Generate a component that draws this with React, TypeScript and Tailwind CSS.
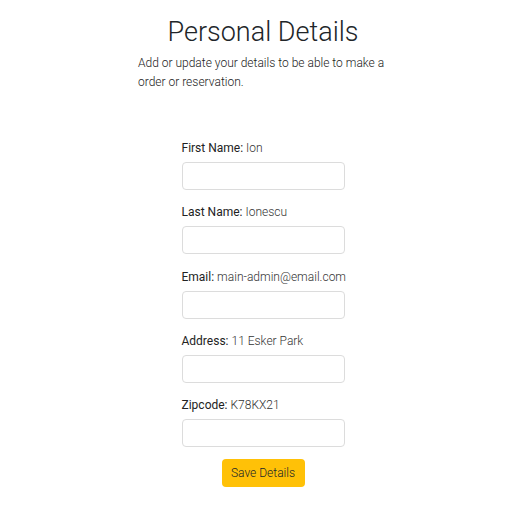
export default function App() {
  const fields = [
    { label: "First Name:", value: "Ion" },
    { label: "Last Name:", value: "Ionescu" },
    { label: "Email:", value: "main-admin@email.com" },
    { label: "Address:", value: "11 Esker Park" },
    { label: "Zipcode:", value: "K78KX21" },
  ];

  return (
    <div className="min-h-screen w-full bg-white font-['Roboto',sans-serif] text-[#212529]">
      <div className="mx-auto flex w-[250px] flex-col pt-[14px]">
        <h1 className="text-center text-[27px] font-light leading-[36px] text-[#212529]">Personal Details</h1>
        <p className="mt-[4px] text-[12px] font-light leading-[19px] text-[#222]">
          Add or update your details to be able to make a order or reservation.
        </p>
      </div>

      <form className="mx-auto mt-[47px] flex w-[163px] flex-col" onSubmit={(e) => e.preventDefault()}>
        {fields.map((f) => (
          <div key={f.label} className="mb-[13.25px] flex flex-col">
            <label className="mb-[5px] whitespace-nowrap text-[12px] leading-[18px] text-[#222]">
              {f.label} <span className="font-light text-[#333]">{f.value}</span>
            </label>
            <input className="h-[28px] w-full rounded-[4px] border border-[#dcdcdc] bg-white px-2 text-[12px] outline-none" />
          </div>
        ))}
        <button
          type="submit"
          className="mx-auto -mt-px h-[28px] w-[83px] rounded-[4px] bg-[#ffc107] text-[12px] font-light text-[#212529]"
        >
          Save Details
        </button>
      </form>
    </div>
  );
}
